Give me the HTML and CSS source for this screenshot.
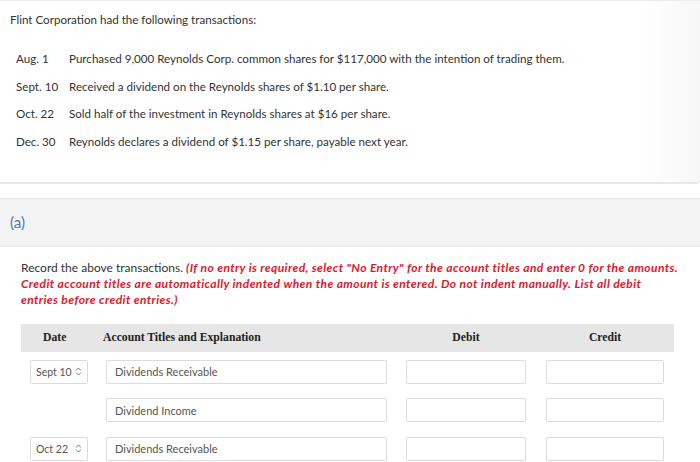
FILE: index.html
```html
<!DOCTYPE html>
<html>
<head>
<meta charset="utf-8">
<link rel="stylesheet" href="styles.css">
</head>
<body>
<div class="problem">
  <p class="intro">Flint Corporation had the following transactions:</p>
  <div class="txns">
    <div class="txn"><span class="tdate">Aug. 1</span><span>Purchased 9,000 Reynolds Corp. common shares for $117,000 with the intention of trading them.</span></div>
    <div class="txn"><span class="tdate">Sept. 10</span><span>Received a dividend on the Reynolds shares of $1.10 per share.</span></div>
    <div class="txn"><span class="tdate">Oct. 22</span><span>Sold half of the investment in Reynolds shares at $16 per share.</span></div>
    <div class="txn"><span class="tdate">Dec. 30</span><span>Reynolds declares a dividend of $1.15 per share, payable next year.</span></div>
  </div>
</div>
<div class="part-head">(a)</div>
<div class="part">
  <p class="instr">Record the above transactions. <em class="warn">(If no entry is required, select "No Entry" for the account titles and enter 0 for the amounts. Credit account titles are automatically indented when the amount is entered. Do not indent manually. List all debit entries before credit entries.)</em></p>
  <div class="journal">
    <div class="jhead">
      <div class="h-date">Date</div>
      <div class="h-acct">Account Titles and Explanation</div>
      <div class="h-num">Debit</div>
      <div class="h-num">Credit</div>
    </div>
    <div class="jrows">
      <div class="cell-date"><div class="sel"><span>Sept 10</span><svg class="chev" width="7" height="9" viewBox="0 0 7 9"><path d="M1 3.5 L3.5 1 L6 3.5 M1 5.5 L3.5 8 L6 5.5" fill="none" stroke="#777" stroke-width="1"/></svg></div></div>
      <div class="cell-acct"><div class="box">Dividends Receivable</div></div>
      <div class="cell-num"><div class="box"></div></div>
      <div class="cell-num"><div class="box"></div></div>

      <div class="cell-date"></div>
      <div class="cell-acct"><div class="box">Dividend Income</div></div>
      <div class="cell-num"><div class="box"></div></div>
      <div class="cell-num"><div class="box"></div></div>

      <div class="cell-date"><div class="sel"><span>Oct 22</span><svg class="chev" width="7" height="9" viewBox="0 0 7 9"><path d="M1 3.5 L3.5 1 L6 3.5 M1 5.5 L3.5 8 L6 5.5" fill="none" stroke="#777" stroke-width="1"/></svg></div></div>
      <div class="cell-acct"><div class="box">Dividends Receivable</div></div>
      <div class="cell-num"><div class="box"></div></div>
      <div class="cell-num"><div class="box"></div></div>
    </div>
  </div>
</div>
</body>
</html>
```
FILE: styles.css
```css
html, body {
  margin: 0;
  padding: 0;
  background: #fff;
}
body {
  font-family: Lato, "Open Sans", sans-serif;
  font-size: 12px;
  color: #333;
  overflow: hidden;
}
.problem {
  border-top: 1px solid #ececec;
  border-bottom: 2px solid #e8e8e8;
  border-bottom-right-radius: 4px;
  padding: 11px 10px 26px;
  font-size: 11.6px;
  background: linear-gradient(to right, #fff 0, #fff 91%, #f7f7f7 100%);
}
.intro {
  margin: 0;
  line-height: 16px;
}
.txns {
  margin-top: 17px;
  padding-left: 6px;
}
.txn {
  display: flex;
  height: 27.7px;
  line-height: 27.7px;
}
.tdate {
  width: 53px;
  flex: none;
}
.part-head {
  margin-top: 14px;
  height: 47px;
  border-top: 1px solid #e6e6e6;
  border-bottom: 1px solid #e6e6e6;
  background: #f3f3f3;
  padding-left: 10px;
  display: flex;
  align-items: center;
  font-size: 15px;
  color: #4a7aa6;
}
.instr {
  margin: 0;
  padding: 13px 21px 0 21px;
  line-height: 16px;
}
.warn {
  color: #d4202c;
  font-weight: bold;
  font-style: italic;
  letter-spacing: 0.4px;
}
.journal {
  margin: 16px 26px 0 21px;
}
.jhead {
  display: grid;
  grid-template-columns: 76px 299px 140px 138px;
  height: 28px;
  align-items: center;
  background: #e6e6e6;
  font-family: "Liberation Serif", serif;
  font-weight: bold;
  font-size: 11.7px;
  color: #222;
}
.h-date {
  padding-left: 22px;
}
.h-acct {
  padding-left: 6px;
}
.h-num {
  text-align: center;
}
.jrows {
  display: grid;
  grid-template-columns: 76px 299px 140px 138px;
  row-gap: 14.5px;
  margin-top: 8px;
}
.cell-date {
  padding-left: 9px;
}
.cell-acct {
  padding: 0 9px;
}
.cell-num {
  padding: 0 10px;
}
.sel, .box {
  height: 24px;
  box-sizing: border-box;
  border: 1px solid #dcdcdc;
  border-radius: 2px;
  background: #fff;
  font-size: 11px;
  color: #555;
  display: flex;
  align-items: center;
  white-space: nowrap;
}
.sel {
  width: 58px;
  padding: 0 5px 0 5px;
  font-size: 10.5px;
  justify-content: space-between;
}
.box {
  padding-left: 8px;
}
.chev {
  display: block;
  flex: none;
}
```
